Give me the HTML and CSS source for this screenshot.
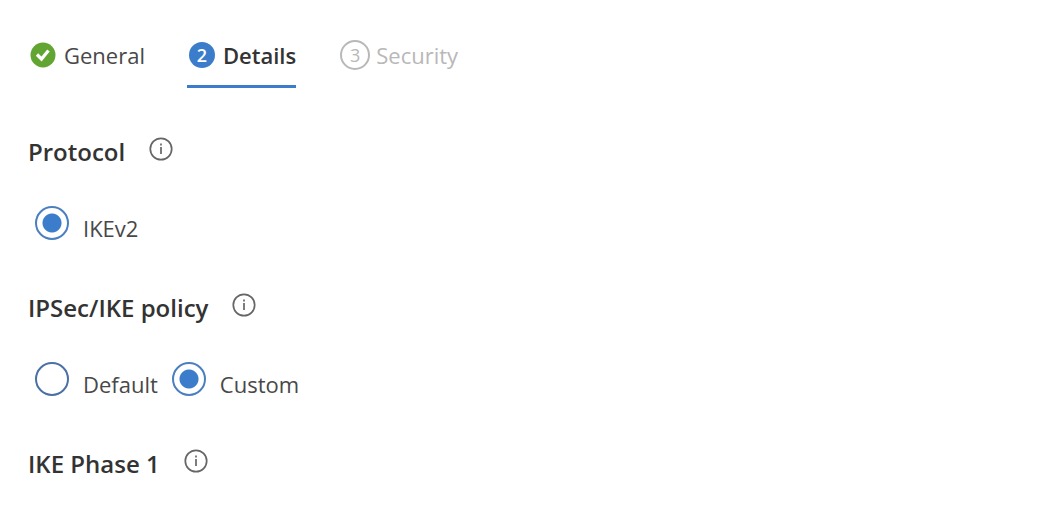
FILE: index.html
```html
<!DOCTYPE html>
<html lang="en">
<head>
    <meta charset="UTF-8">
    <meta name="viewport" content="width=device-width, initial-scale=1.0">
    <title>Connection details</title>
    <link rel="stylesheet" href="styles.css">
</head>
<body>
<nav class="steps">
    <a class="step" href="#general">
        <svg class="step-icon" viewBox="0 0 26 26">
            <circle cx="13" cy="13" r="12.500" fill="#62a533"/>
            <path d="M7 12.500l4.500 4.500 7-8.500" fill="none" stroke="#fff" stroke-width="3.200"/>
        </svg>
        <span>General</span>
    </a>
    <a class="step active" href="#details">
        <span class="step-number">2</span>
        <span>Details</span>
    </a>
    <a class="step disabled" href="#security">
        <span class="step-number">3</span>
        <span>Security</span>
    </a>
</nav>

<form class="details">
    <fieldset class="group">
        <legend class="heading">
            <span>Protocol</span>
            <svg class="info" viewBox="0 0 24 24">
                <circle cx="12" cy="12" r="10.700"/>
                <path d="M12 10v7M12 6.500v2"/>
            </svg>
        </legend>
        <div class="options">
            <label class="option"><input type="radio" name="protocol" checked><span>IKEv2</span></label>
        </div>
    </fieldset>

    <fieldset class="group">
        <legend class="heading">
            <span>IPSec/IKE policy</span>
            <svg class="info" viewBox="0 0 24 24">
                <circle cx="12" cy="12" r="10.700"/>
                <path d="M12 10v7M12 6.500v2"/>
            </svg>
        </legend>
        <div class="options">
            <label class="option"><input type="radio" name="policy"><span>Default</span></label>
            <label class="option"><input type="radio" name="policy" checked><span>Custom</span></label>
        </div>
    </fieldset>

    <h2 class="heading">
        <span>IKE Phase 1</span>
        <svg class="info" viewBox="0 0 24 24">
            <circle cx="12" cy="12" r="10.700"/>
            <path d="M12 10v7M12 6.500v2"/>
        </svg>
    </h2>
</form>
</body>
</html>
```
FILE: styles.css
```css
:root {
    --blue: #3b7dcb;
    --text: #484848;
    --muted: #b8b8b8;
}

* {
    box-sizing: border-box;
}

body {
    margin: 0;
    padding: 36px 28px;
    background: #fff;
    color: var(--text);
    font-family: "Segoe UI", "Open Sans", "Noto Sans", sans-serif;
    font-size: 22px;
    line-height: 36px;
}

.steps {
    display: flex;
    flex-wrap: wrap;
    gap: 42px;
}

.step {
    display: flex;
    align-items: center;
    gap: 8px;
    height: 52px;
    padding: 0 0 12px 2px;
    border-bottom: 3px solid transparent;
    color: inherit;
    text-decoration: none;
}

.step-icon {
    width: 26px;
    height: 26px;
}

.step-number {
    display: flex;
    align-items: center;
    justify-content: center;
    width: 26px;
    height: 26px;
    border-radius: 50%;
    font-size: 18px;
}

.active {
    border-bottom-color: var(--blue);
    color: #333;
    font-weight: 600;
}

.active .step-number {
    background: var(--blue);
    color: #fff;
}

.disabled {
    color: var(--muted);
}

.disabled .step-number {
    width: 30px;
    height: 30px;
    border: 2px solid var(--muted);
}

.disabled {
    gap: 6px;
}

.details {
    margin-top: 46px;
}

.group {
    min-width: 0;
    margin: 0 0 40px;
    padding: 0;
    border: 0;
}

.heading {
    display: flex;
    align-items: center;
    gap: 24px;
    margin: 0;
    padding: 0;
    color: #333;
    font-size: 24px;
    font-weight: 600;
}

.info {
    width: 24px;
    height: 24px;
    margin-bottom: 6px;
    fill: none;
    stroke: #666;
    stroke-width: 1.7;
}

.options {
    display: flex;
    flex-wrap: wrap;
    gap: 14px;
    padding: 36px 7px 0;
}

.option {
    display: flex;
    align-items: center;
    gap: 14px;
}

.option input {
    appearance: none;
    width: 34px;
    height: 34px;
    margin: 0 0 10px;
    border: 2px solid #4c6fa5;
    border-radius: 50%;
}

.option input:checked {
    border-color: #4a7fc0;
    background: radial-gradient(circle, var(--blue) 9px, #fff 10px);
}
```
